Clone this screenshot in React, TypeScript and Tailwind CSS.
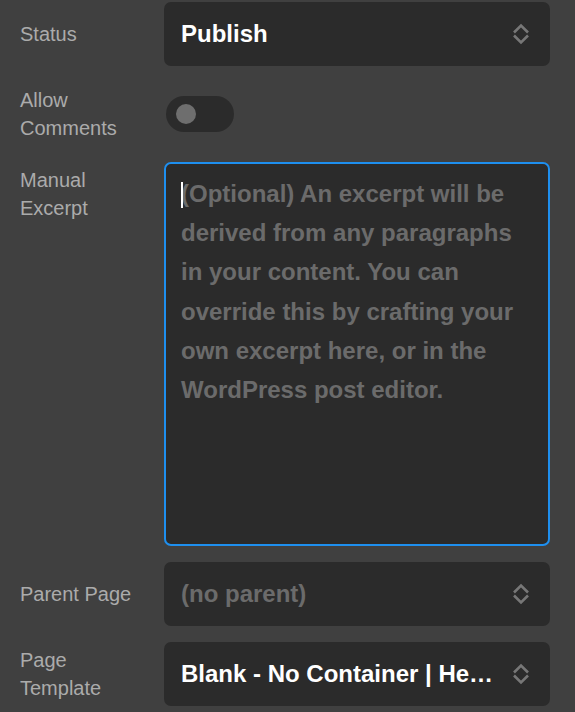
import React from "react";

const font = { fontFamily: '"Liberation Sans", Arial, sans-serif' };

function Chevrons() {
  return (
    <svg width="18" height="22" viewBox="0 0 18 22" fill="none" className="shrink-0">
      <path d="M2 9.5 L9 2.5 L16 9.5" stroke="#777" strokeWidth="2.6" />
      <path d="M2 12.5 L9 19.5 L16 12.5" stroke="#777" strokeWidth="2.6" />
    </svg>
  );
}

function Select({ value, muted }: { value: string; muted?: boolean }) {
  return (
    <div className="h-16 bg-[#2b2b2b] rounded-[7px] flex items-center pl-[17px] pr-5">
      <span
        className={`flex-1 min-w-0 truncate text-[24px] font-bold pr-[14px] ${
          muted ? "text-[#6b6b6b]" : "text-white"
        }`}
      >
        {value}
      </span>
      <Chevrons />
    </div>
  );
}

function Row({ label, children, top }: { label: string; children: React.ReactNode; top?: boolean }) {
  return (
    <div className={`flex gap-5 ${top ? "items-start" : "items-center"}`}>
      <div className={`w-[124px] shrink-0 text-[20px] leading-[28px] text-[#ababab] ${top ? "pt-1" : ""}`}>
        {label}
      </div>
      <div className="flex-1 min-w-0">{children}</div>
    </div>
  );
}

export default function App() {
  return (
    <div className="min-h-[712px] bg-[#404040] pl-5 pr-[25px] pt-[2px] flex flex-col gap-4" style={font}>
      <Row label="Status">
        <Select value="Publish" />
      </Row>

      <Row label="Allow Comments">
        <div className="h-16 flex items-center">
          <div className="ml-[2px] w-[68px] h-9 rounded-full bg-[#2b2b2b] flex items-center pl-[10px]">
            <div className="w-5 h-5 rounded-full bg-[#6e6e6e]" />
          </div>
        </div>
      </Row>

      <Row label="Manual Excerpt" top>
        <div className="h-[384px] rounded-[7px] border-2 border-[#1e8fef] bg-[#2b2b2b] pl-[15px] pr-4 pt-[10px] relative">
          <div className="absolute left-[15px] top-[18px] w-[2px] h-[26px] bg-white" />
          <p className="text-[24px] leading-[39.2px] font-bold text-[#6b6b6b]">
            (Optional) An excerpt will be derived from any paragraphs in your content. You can
            override this by crafting your own excerpt here, or in the WordPress post editor.
          </p>
        </div>
      </Row>

      <Row label="Parent Page">
        <Select value="(no parent)" muted />
      </Row>

      <Row label="Page Template">
        <Select value="Blank - No Container | Header and Footer" />
      </Row>
    </div>
  );
}
